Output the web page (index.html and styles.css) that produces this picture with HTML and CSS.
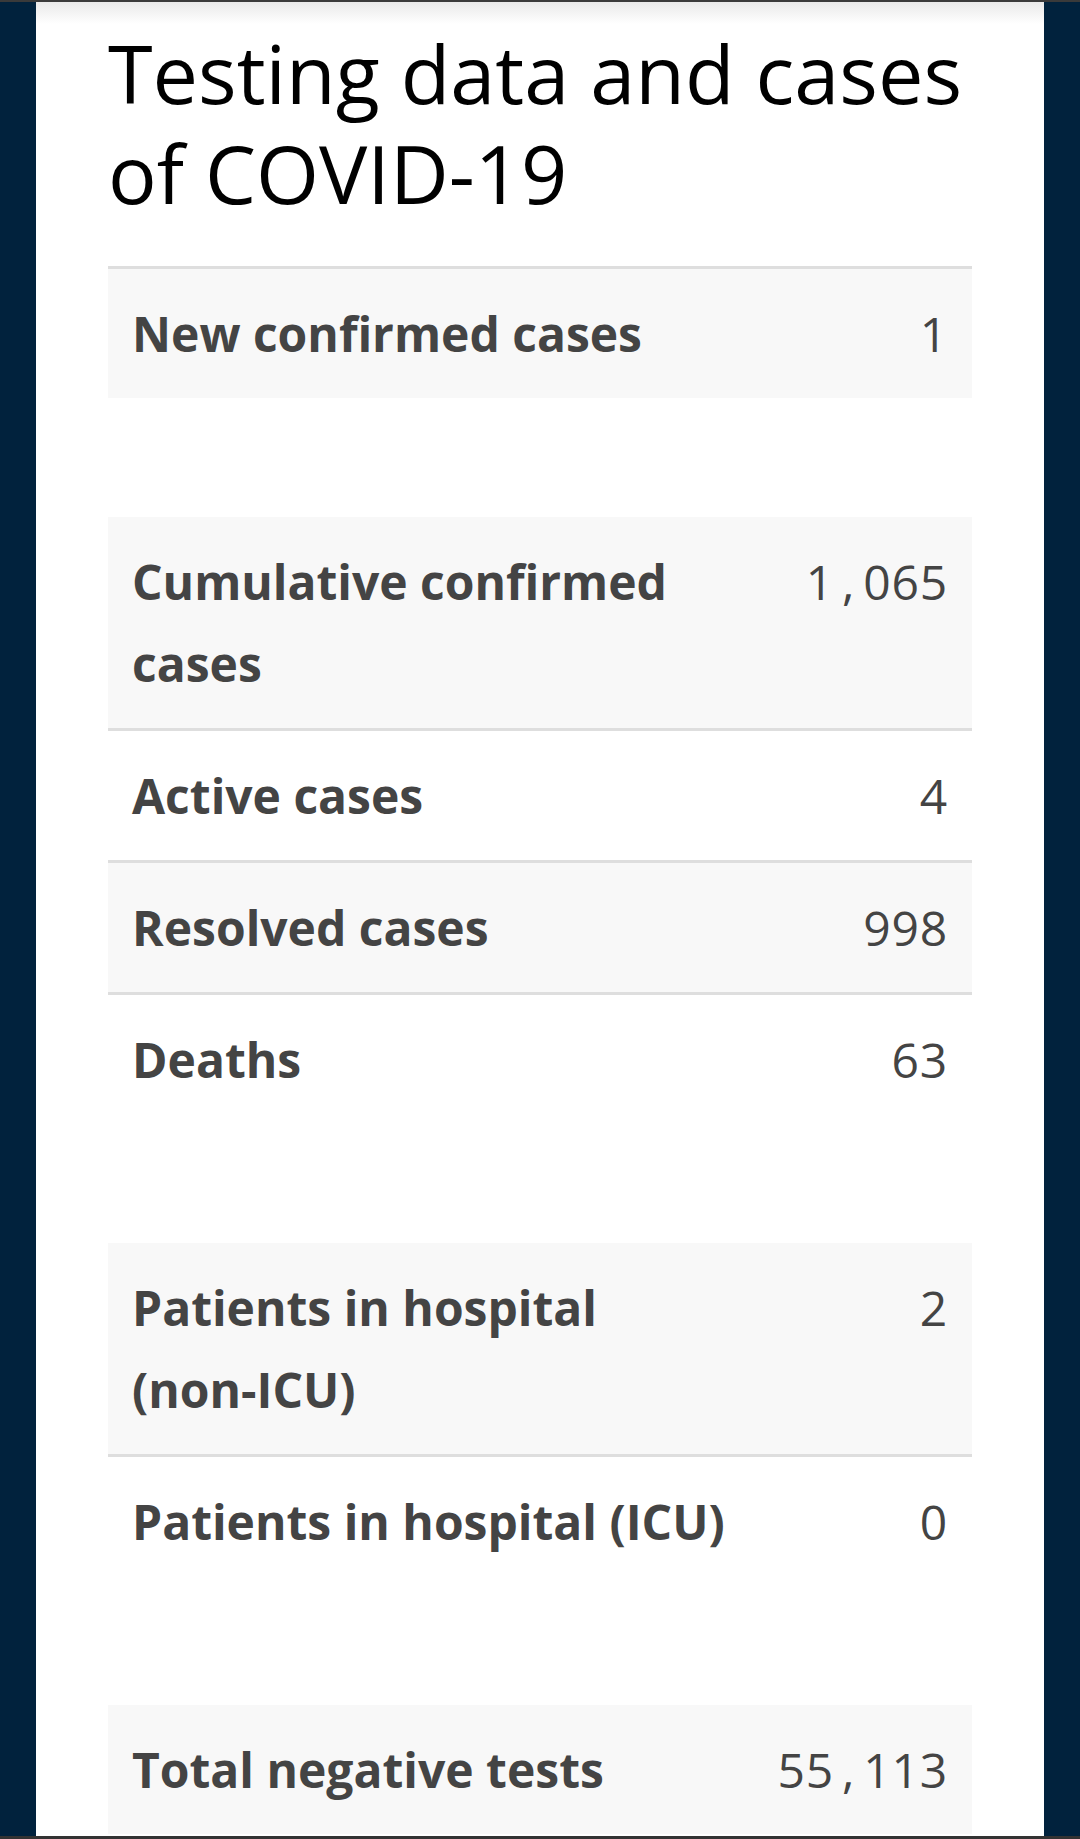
FILE: index.html
```html
<!DOCTYPE html>
<html lang="en">
<head>
<meta charset="utf-8">
<title>Testing data and cases of COVID-19</title>
<link rel="stylesheet" href="styles.css">
</head>
<body>
<div class="status-edge"></div>
<main class="page">
  <h1 class="title">Testing data and cases of COVID-19</h1>

  <section class="stats stats--ruled">
    <div class="stat-row"><div class="stat-label">New confirmed cases</div><div class="stat-value">1</div></div>
  </section>

  <section class="stats">
    <div class="stat-row"><div class="stat-label">Cumulative confirmed cases</div><div class="stat-value">1<span class="sep">,</span>065</div></div>
    <div class="stat-row"><div class="stat-label">Active cases</div><div class="stat-value">4</div></div>
    <div class="stat-row"><div class="stat-label">Resolved cases</div><div class="stat-value">998</div></div>
    <div class="stat-row"><div class="stat-label">Deaths</div><div class="stat-value">63</div></div>
  </section>

  <section class="stats">
    <div class="stat-row"><div class="stat-label">Patients in hospital <span class="nowrap">(non-ICU)</span></div><div class="stat-value">2</div></div>
    <div class="stat-row"><div class="stat-label">Patients in hospital (ICU)</div><div class="stat-value">0</div></div>
  </section>

  <section class="stats">
    <div class="stat-row"><div class="stat-label">Total negative tests</div><div class="stat-value">55<span class="sep">,</span>113</div></div>
  </section>
</main>
<div class="nav-edge"></div>
</body>
</html>
```

FILE: styles.css
```css
html, body {
  margin: 0;
  padding: 0;
}

body {
  background: #01223d;
  height: 1839px;
  overflow: hidden;
  font-family: "Open Sans", "Noto Sans", sans-serif;
}

.status-edge {
  height: 2px;
  background: #3a3a3a;
}

.page {
  margin: 0 36px;
  padding: 21px 72px 0;
  background: linear-gradient(#e9e9e9 0, #ffffff 22px) no-repeat, #ffffff;
  min-height: 1900px;
}

.title {
  margin: 0 0 43px;
  font-size: 81px;
  line-height: 100px;
  font-weight: 400;
  color: #000000;
}

.stats {
  margin-bottom: 119px;
}

.stats--ruled {
  border-top: 3px solid #dedede;
}

.stat-row {
  display: grid;
  grid-template-columns: 640px 1fr;
  padding: 23.5px 24px;
  color: #444444;
  font-size: 48px;
  line-height: 82px;
}

.stat-row + .stat-row {
  border-top: 3px solid #dedede;
}

.stat-row:nth-child(odd) {
  background: #f8f8f8;
}

.stat-label {
  font-weight: 700;
}

.nowrap {
  white-space: nowrap;
}

.stat-value {
  font-weight: 400;
  text-align: right;
  letter-spacing: 0.8px;
}

.sep {
  margin: 0 8px;
}

.nav-edge {
  position: fixed;
  left: 0;
  right: 0;
  bottom: 0;
  height: 3px;
  background: #333333;
}
```
